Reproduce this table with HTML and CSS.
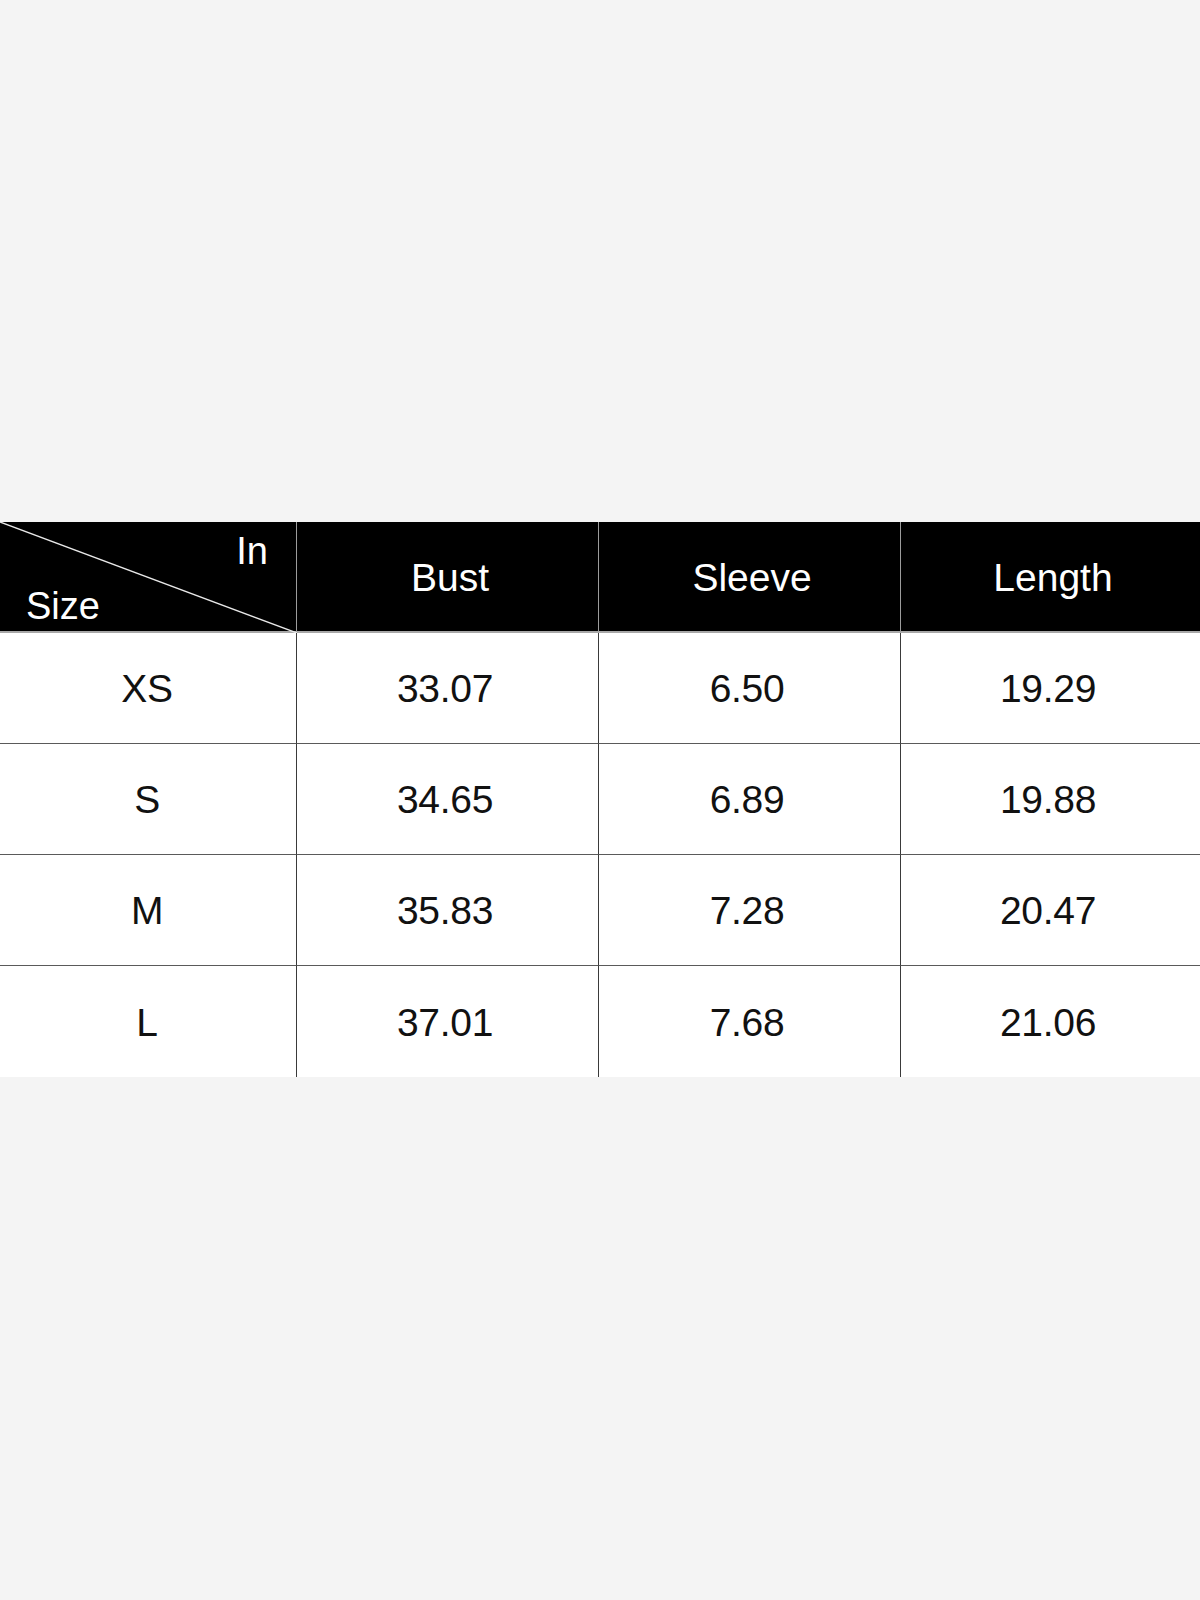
FILE: index.html
```html
<!DOCTYPE html>
<html lang="en">
<head>
<meta charset="utf-8">
<title>Size Chart</title>
<link rel="stylesheet" href="styles.css">
</head>
<body>
<div class="chart">
  <div class="cell head corner">
    <svg class="diag" viewBox="0 0 297 111" preserveAspectRatio="none" aria-hidden="true">
      <line x1="0" y1="0" x2="297" y2="111" stroke="#e8e8e8" stroke-width="1.4"/>
    </svg>
    <span class="corner-in">In</span>
    <span class="corner-size">Size</span>
  </div>
  <div class="cell head">Bust</div>
  <div class="cell head">Sleeve</div>
  <div class="cell head last">Length</div>

  <div class="cell first">XS</div>
  <div class="cell">33.07</div>
  <div class="cell">6.50</div>
  <div class="cell last">19.29</div>

  <div class="cell first">S</div>
  <div class="cell">34.65</div>
  <div class="cell">6.89</div>
  <div class="cell last">19.88</div>

  <div class="cell first">M</div>
  <div class="cell">35.83</div>
  <div class="cell">7.28</div>
  <div class="cell last">20.47</div>

  <div class="cell first bottom">L</div>
  <div class="cell bottom">37.01</div>
  <div class="cell bottom">7.68</div>
  <div class="cell bottom last">21.06</div>
</div>
</body>
</html>
```

FILE: styles.css
```css
html, body {
  margin: 0;
  padding: 0;
  background: #f4f4f4;
}

body {
  font-family: "Liberation Sans", Arial, sans-serif;
  width: 1200px;
  height: 1600px;
}

.chart {
  margin-top: 522px;
  display: grid;
  grid-template-columns: 297px 302px 302px 1fr;
  grid-auto-rows: 111px;
  background: #ffffff;
}

.cell {
  box-sizing: border-box;
  display: flex;
  align-items: center;
  justify-content: center;
  font-size: 39px;
  letter-spacing: -0.3px;
  color: #111111;
  border-right: 1px solid #3a3a3a;
  border-bottom: 1px solid #5a5a5a;
  padding: 2px 5px 0 0;
}

.cell.first {
  padding-right: 2px;
}

.cell.last {
  border-right: none;
}

.cell.bottom {
  border-bottom: none;
}

.head {
  background: #000000;
  color: #ffffff;
  border-right: 1px solid #9c9c9c;
  border-bottom: 2px solid #a8a8a8;
  padding: 2px 0 0 5px;
  letter-spacing: 0;
}

.corner {
  position: relative;
  display: flex;
  flex-direction: column;
  align-items: stretch;
  justify-content: space-between;
  padding: 10px 0 5px 0;
  line-height: 39px;
  font-size: 38px;
}

.diag {
  position: absolute;
  left: 0;
  top: 0;
  width: 297px;
  height: 111px;
}

.corner-in {
  align-self: flex-end;
  margin-right: 28px;
}

.corner-size {
  align-self: flex-start;
  margin-left: 26px;
}
```
